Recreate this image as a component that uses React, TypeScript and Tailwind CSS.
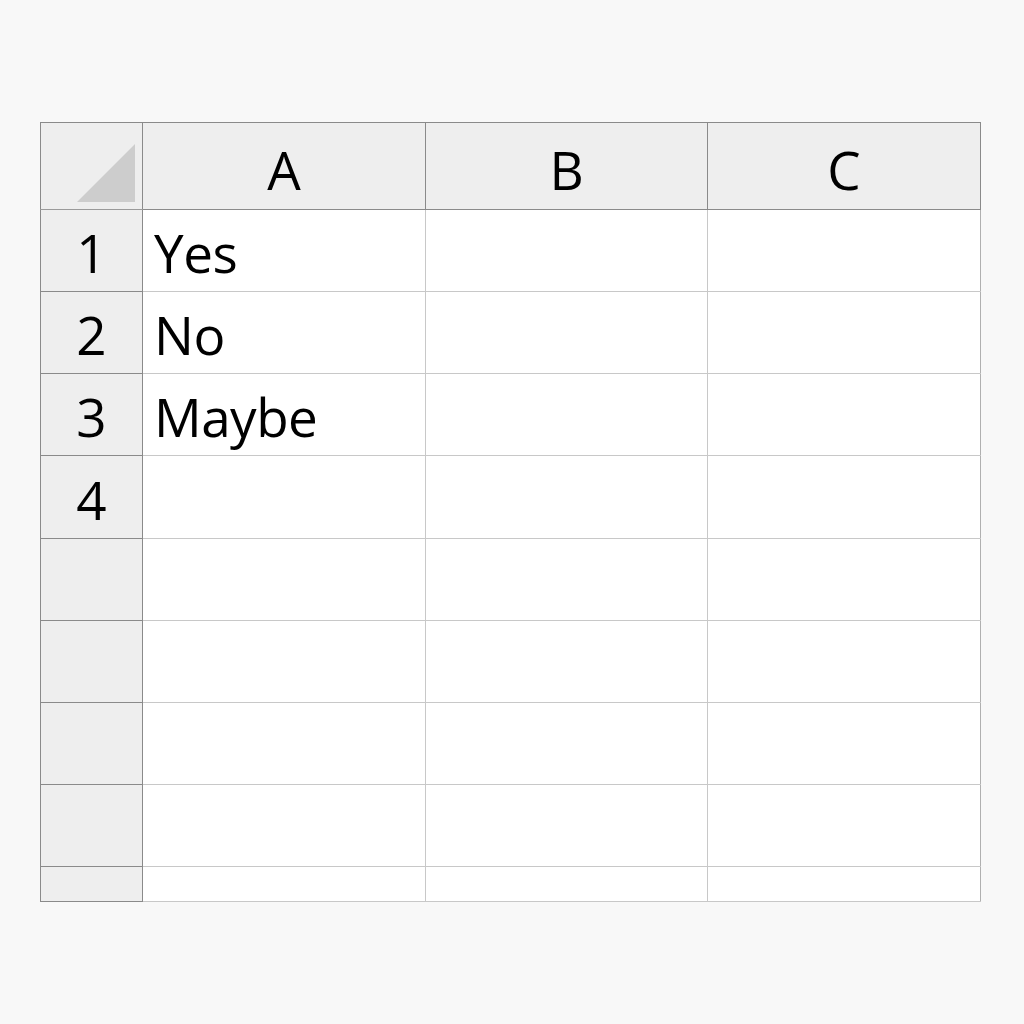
const COLS = ["A", "B", "C"];

const ROWS: { label: string; value: string; h: string }[] = [
  { label: "1", value: "Yes", h: "h-[82px]" },
  { label: "2", value: "No", h: "h-[82px]" },
  { label: "3", value: "Maybe", h: "h-[82px]" },
  { label: "4", value: "", h: "h-[83px]" },
  { label: "", value: "", h: "h-[82px]" },
  { label: "", value: "", h: "h-[82px]" },
  { label: "", value: "", h: "h-[82px]" },
  { label: "", value: "", h: "h-[82px]" },
  { label: "", value: "", h: "h-[35px]" },
];

export default function App() {
  return (
    <div
      className="min-h-screen w-full bg-[#f8f8f8] pt-[122px] pl-[40px] text-black"
      style={{ fontFamily: '"Open Sans", "Noto Sans", sans-serif' }}
    >
      <table className="border-collapse table-fixed border border-[#8a8a8a]">
        <colgroup>
          <col className="w-[102px]" />
          <col className="w-[283px]" />
          <col className="w-[282px]" />
          <col className="w-[273px]" />
        </colgroup>
        <thead>
          <tr className="h-[87px] bg-[#eeeeee]">
            <th className="border border-[#8a8a8a] border-b-[#9a9a9a] p-0 relative">
              {/* select-all corner */}
              <svg width="60" height="60" viewBox="0 0 60 60" className="absolute right-[6px] bottom-[6px]">
                <polygon points="59,1 59,59 1,59" fill="#cdcdcd" />
              </svg>
            </th>
            {COLS.map((c) => (
              <th
                key={c}
                className="border border-[#8a8a8a] p-0 text-center align-middle text-[53px] font-normal leading-none"
              >
                <span className="relative top-[3px]">{c}</span>
              </th>
            ))}
          </tr>
        </thead>
        <tbody>
          {ROWS.map((r, i) => (
            <tr key={i} className={r.h}>
              <td className="border border-[#8a8a8a] bg-[#eeeeee] p-0 text-center align-middle text-[53px] leading-none">
                <span className="relative top-[2px]">{r.label}</span>
              </td>
              <td className="border border-[#c8c8c8] border-l-[#8a8a8a] bg-white p-0 pl-[11px] align-middle text-[53px] leading-none tracking-[-0.5px]">
                <span className="relative top-[2px]">{r.value}</span>
              </td>
              <td className="border border-[#c8c8c8] bg-white p-0" />
              <td className="border border-[#c8c8c8] border-r-[#b0b0b0] bg-white p-0" />
            </tr>
          ))}
        </tbody>
      </table>
    </div>
  );
}
